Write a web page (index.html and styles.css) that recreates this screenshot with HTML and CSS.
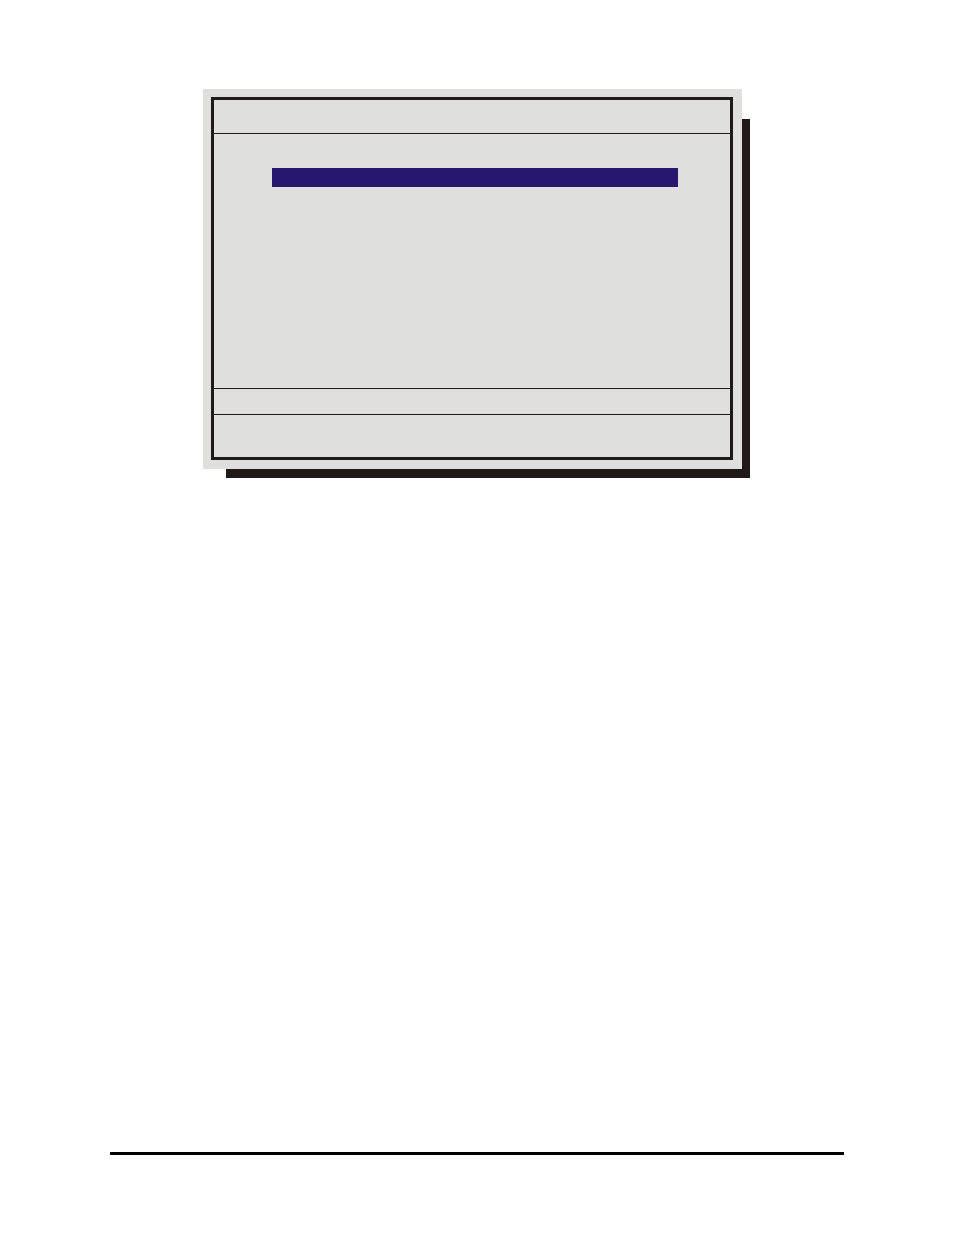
FILE: index.html
```html
<!DOCTYPE html>
<html lang="en">
<head>
    <meta charset="UTF-8">
    <meta name="viewport" content="width=device-width, initial-scale=1.0">
    <title>Setup menu</title>
    <link rel="stylesheet" href="styles.css">
</head>
<body>
    <main class="content">
      <div class="screen">
        <div class="screen-frame">
          <div class="screen-title"></div>
          <div class="screen-menu">
            <div class="menu-selected"></div>
          </div>
          <div class="screen-status"></div>
          <div class="screen-keys"></div>
        </div>
      </div>
    </main>
    <footer class="page-footer"></footer>
</body>
</html>
```

FILE: styles.css
```css
* {
  box-sizing: border-box;
}

body {
  margin: 0;
  min-height: 100vh;
  padding: 89px 110px 80px;
  display: flex;
  flex-direction: column;
  background-color: #ffffff;
  font-family: "Liberation Sans", sans-serif;
}

.content {
  flex: 1;
}

.screen {
  position: relative;
  max-width: 539px;
  margin-left: 93px;
  padding: 8px 9px 9px 8px;
  background-color: #dfdfdd;
}

/* hard drop shadow, starts in from the top and left edges */
.screen::before {
  content: "";
  position: absolute;
  z-index: -1;
  top: 30px;
  left: 23px;
  right: -8px;
  bottom: -9px;
  background-color: #1f1a17;
}

.screen-frame {
  border: 3px solid #1f1a17;
}

.screen-title {
  height: 34px;
  border-bottom: 1px solid #1f1a17;
}

.screen-menu {
  height: 255px;
  padding: 34px 52px 0 58px;
  border-bottom: 1px solid #1f1a17;
}

.menu-selected {
  height: 19px;
  background-color: #28166f;
}

.screen-status {
  height: 26px;
  border-bottom: 1px solid #1f1a17;
}

.screen-keys {
  height: 42px;
}

.page-footer {
  border-top: 3px solid #000000;
}
```
